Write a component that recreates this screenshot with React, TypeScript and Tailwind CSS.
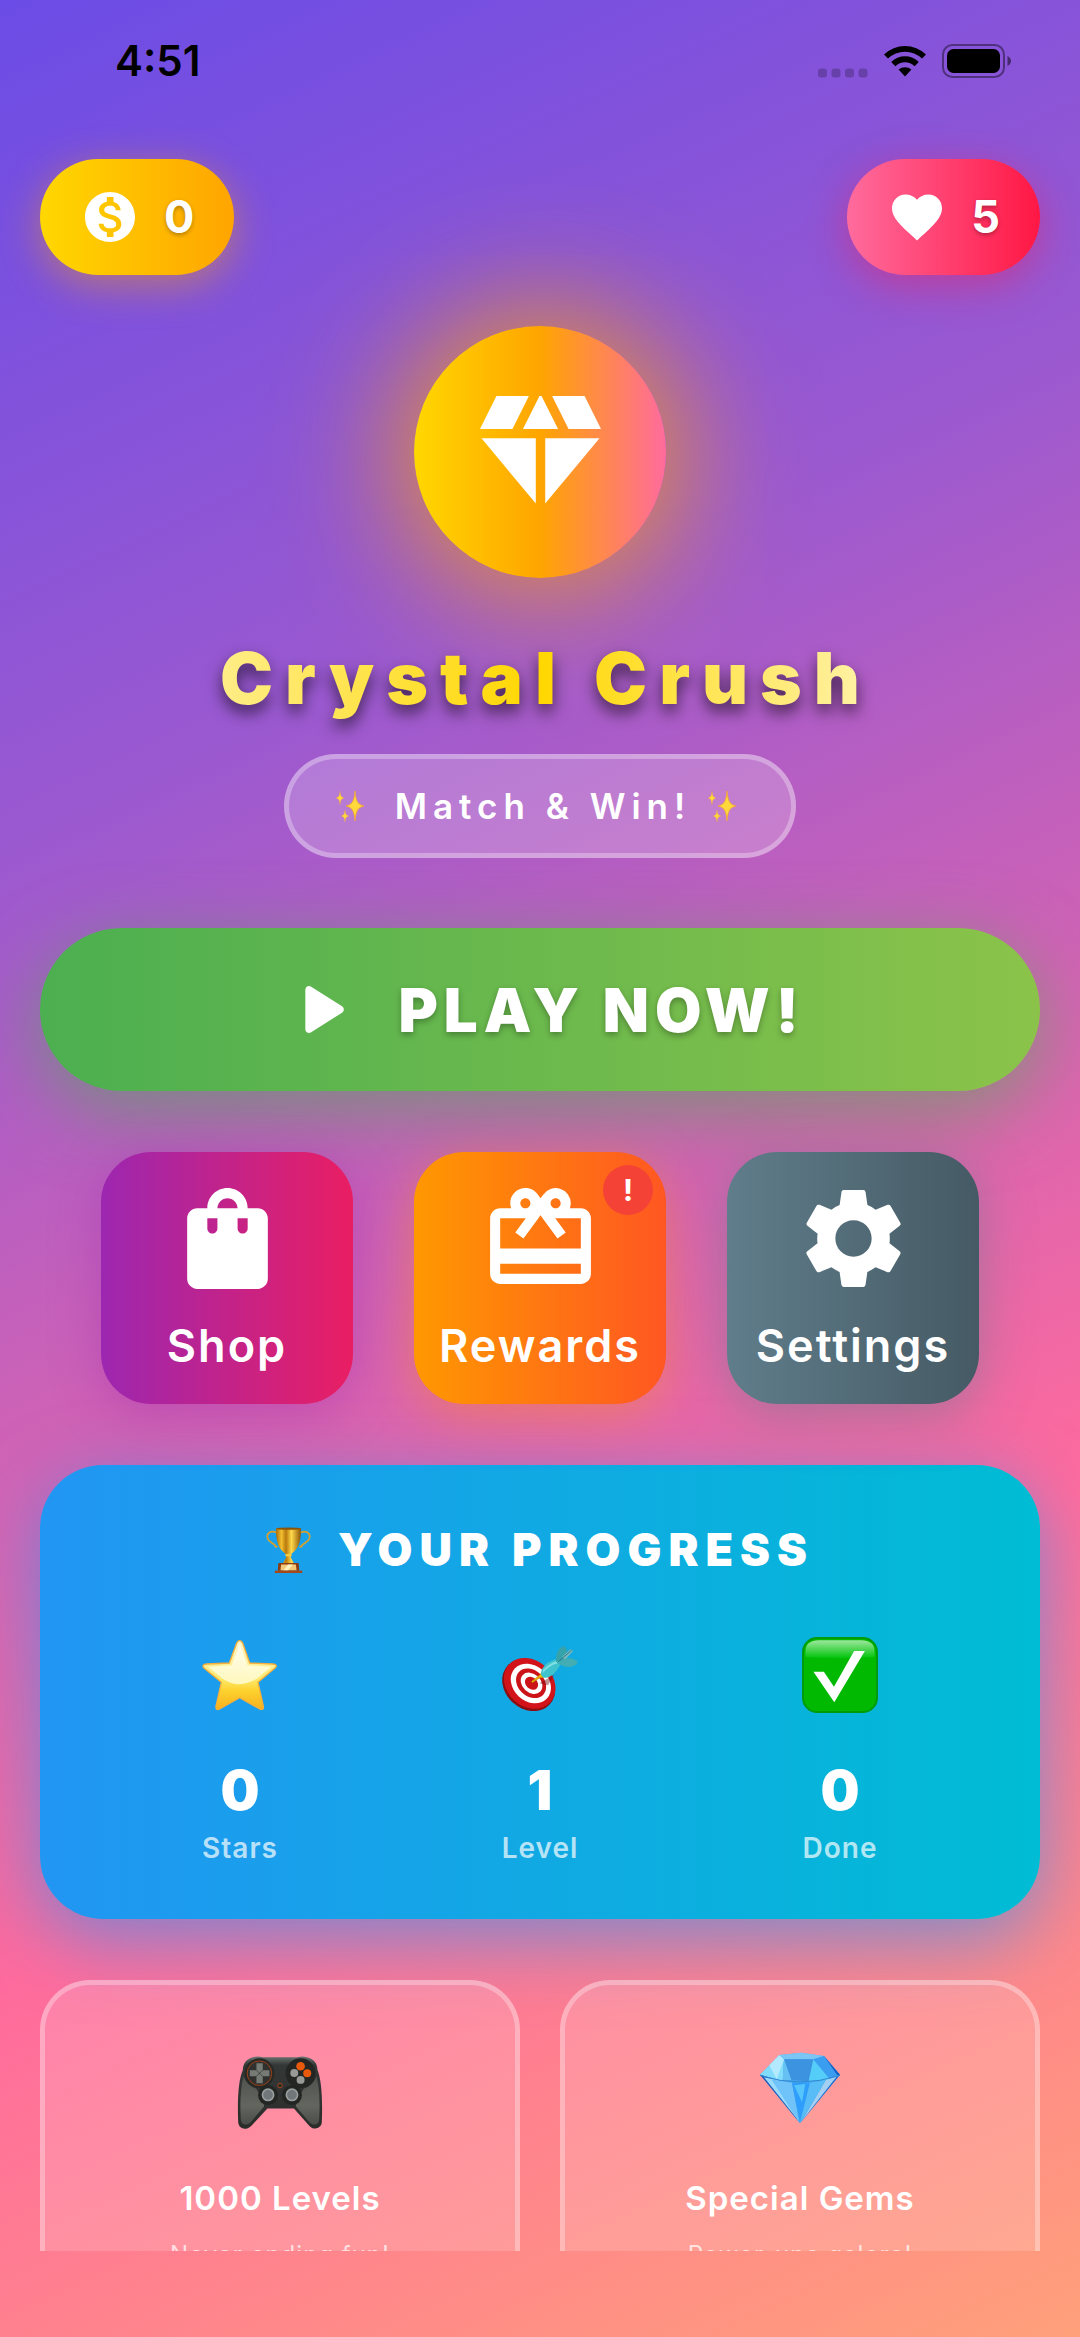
import type { ReactNode } from "react";
import {
  MdCardGiftcard,
  MdDiamond,
  MdFavorite,
  MdMonetizationOn,
  MdSettings,
  MdShoppingBag,
} from "react-icons/md";

function StatusBar() {
  return (
    <header className="flex h-[119px] shrink-0 items-start justify-between pt-9 pr-[68px] pl-[115px] text-black">
      <time className="text-[42px] leading-[50px] font-semibold">4:51</time>
      <div className="flex items-center gap-4 pt-2">
        <svg viewBox="0 0 50 33" className="h-[33px] w-[50px]" aria-label="No signal">
          <g fill="#000" fillOpacity="0.22">
            <rect x="0" y="23.500" width="9" height="9" rx="3" />
            <rect x="13.500" y="23.500" width="9" height="9" rx="3" />
            <rect x="27" y="23.500" width="9" height="9" rx="3" />
            <rect x="40.500" y="23.500" width="9" height="9" rx="3" />
          </g>
        </svg>
        <svg viewBox="0 0 42 32" className="h-[32px] w-[42px]" aria-label="Wi-Fi">
          <path d="M0 9.500A30 30 0 0 1 42 9.500L38 13.600A24.300 24.300 0 0 0 4 13.600Z" />
          <path d="M7.200 17A19.500 19.500 0 0 1 34.800 17L30.600 21.200A13.600 13.600 0 0 0 11.400 21.200Z" />
          <path d="M14.600 24.600A9.600 9.600 0 0 1 27.400 24.600L21 31.500Z" />
        </svg>
        <svg viewBox="0 0 70 34" className="h-[34px] w-[70px]" aria-label="Battery full">
          <rect x="1" y="1" width="61" height="32" rx="9.500" fill="none" stroke="#000" strokeOpacity="0.42" strokeWidth="2" />
          <rect x="5" y="5" width="53" height="24" rx="6.500" />
          <path d="M65.500 12Q69 14 69 17T65.500 22Z" fillOpacity="0.5" />
        </svg>
      </div>
    </header>
  );
}

function Sparkles() {
  const star = "M0-15C1-4 3-1.500 9 0C3 1.500 1 4 0 15C-1 4-3 1.500-9 0C-3-1.500-1-4 0-15Z";
  return (
    <svg viewBox="0 0 32 32" className="h-8 w-8" aria-hidden="true">
      <g fill="#ffd93b" stroke="#f8a52b" strokeWidth="0.700">
        <path d={star} transform="translate(20 16)" />
        <path d={star} transform="translate(5 8) scale(.45)" />
        <path d={star} transform="translate(10 26) scale(.45 .4)" />
      </g>
    </svg>
  );
}

function Trophy() {
  return (
    <svg viewBox="0 0 134 140" className="h-[47px] w-[45px]" aria-hidden="true">
      <defs>
        <linearGradient id="cup">
          <stop offset="0" stopColor="#a86a08" />
          <stop offset=".22" stopColor="#f2c02f" />
          <stop offset=".4" stopColor="#b8780c" />
          <stop offset=".62" stopColor="#ffd94a" />
          <stop offset="1" stopColor="#8c5206" />
        </linearGradient>
      </defs>
      <g fill="none" stroke="#d9a02a" strokeWidth="5">
        <path d="M34 18C14 8 0 18 5 34C9 48 24 46 32 60M26 60q4-4 8 0" />
        <path d="M100 18C120 8 134 18 129 34C125 48 110 46 102 60M108 60q-4-4-8 0" />
      </g>
      <path d="M30 4H104C105 38 98 66 78 78C72 82 72 92 82 104V108H52V104C62 92 62 82 56 78C36 66 29 38 30 4Z" fill="url(#cup)" />
      <ellipse cx="67" cy="5" rx="37" ry="3.500" fill="#8a5307" />
      <ellipse cx="67" cy="84" rx="10" ry="4" fill="#f6c945" />
      <path d="M37 107H97L99 130H35Z" fill="#8c3b12" />
      <path d="M26 130H108V137H26Z" fill="#a5481a" />
      <path d="M45 112H89L91 129H43Z" fill="#f5c877" />
      <path d="M52 129L66 112H80L66 129Z" fill="#fff0bd" />
    </svg>
  );
}

function Star() {
  return (
    <svg viewBox="0 0 228 216" className="h-[72px] w-[76px]" aria-hidden="true">
      <defs>
        <linearGradient id="starBody" x2="0" y2="1">
          <stop offset="0" stopColor="#fff6cf" />
          <stop offset=".55" stopColor="#fdea6e" />
          <stop offset=".72" stopColor="#fdd22f" />
          <stop offset="1" stopColor="#f9b01c" />
        </linearGradient>
        <linearGradient id="starShine" x2="0" y2="1">
          <stop offset="0" stopColor="#fffdf0" />
          <stop offset="1" stopColor="#fff8bd" />
        </linearGradient>
      </defs>
      <path
        d="M113 5Q119 5 123 15L143 72L212 75Q229 77 219 87L168 130L184 201Q186 216 173 210L113 176L53 210Q40 216 42 201L58 130L6 87Q-3 77 14 75L82 72L103 15Q107 5 113 5Z"
        fill="url(#starBody)"
        stroke="#f5ae3c"
        strokeWidth="4"
      />
      <path d="M113 14L137 79L208 83L164 119Q114 152 62 119L18 83L89 79Z" fill="url(#starShine)" />
    </svg>
  );
}

function Target() {
  return (
    <svg viewBox="0 0 228 216" className="h-[72px] w-[76px]" aria-hidden="true">
      <g transform="translate(0 21)">
        <ellipse cx="80" cy="117" rx="86" ry="71" transform="rotate(43 80 117)" fill="#8f0c10" />
        <g transform="rotate(43 83 112)">
          <ellipse cx="83" cy="112" rx="84" ry="69" fill="#d2141a" />
          <ellipse cx="86" cy="110" rx="66" ry="53" fill="#fff" />
          <ellipse cx="86" cy="109" rx="50" ry="39" fill="#cc1318" />
          <ellipse cx="87" cy="108" rx="36" ry="28" fill="#fff" />
          <ellipse cx="87" cy="108" rx="22" ry="17" fill="#cc1318" />
        </g>
        <path d="M112 112L157 86L138 118Z" fill="#7a1010" fillOpacity=".45" />
        <path d="M89 106L111 89L119 80L124 95L113 95L91 110Z" fill="#f3b90b" stroke="#b98308" strokeWidth="2" />
        <path d="M117 87C115 61 142 42 168 39L177 50C168 74 146 99 125 95Z" fill="#3fc3cd" />
        <path d="M123 72C136 58 150 48 168 44L167 52C148 57 134 68 123 81Z" fill="#a0eef0" fillOpacity=".65" />
        <path d="M162 48C160 24 171 2 185 1C200 8 196 28 186 42Z" fill="#36a2aa" />
        <path d="M180 33L205 10L213 15L189 41Z" fill="#7cb6bd" />
        <path d="M168 52C185 31 216 33 228 48C216 68 187 66 168 52Z" fill="#42aeb3" />
        <path d="M166 50L208 13" stroke="#287e88" strokeWidth="3" />
      </g>
    </svg>
  );
}

function CheckBadge() {
  return (
    <svg viewBox="0 0 226 226" className="h-[76px] w-[76px]" aria-hidden="true">
      <defs>
        <linearGradient id="checkGloss" x2="0" y2="1">
          <stop offset="0" stopColor="#9be79b" />
          <stop offset="1" stopColor="#00c40c" />
        </linearGradient>
      </defs>
      <rect x="3" y="3" width="220" height="220" rx="42" fill="#00b900" stroke="#009c0b" strokeWidth="6" />
      <path d="M10 60V45Q10 10 50 10H176Q216 10 216 45V60Q112 66 10 60Z" fill="url(#checkGloss)" />
      <path d="M34 103H65L95 148L155 42H187L96 194Z" fill="#fff" />
    </svg>
  );
}

function GamePad() {
  return (
    <svg viewBox="0 -12 256 232" className="h-[77px] w-[86px]" aria-hidden="true">
      <defs>
        <linearGradient id="padBody" x2="0" y2="1">
          <stop offset="0" stopColor="#6b7370" />
          <stop offset=".12" stopColor="#333735" />
          <stop offset="1" stopColor="#2b2d2b" />
        </linearGradient>
        <linearGradient id="padGrip" x2="0" y2="1">
          <stop offset="0" stopColor="#50524e" />
          <stop offset=".6" stopColor="#63655f" />
          <stop offset="1" stopColor="#4b4d49" />
        </linearGradient>
      </defs>
      <path
        d="M50 3Q62-1 76 4H180Q194-1 206 3C230 8 240 22 241 42C252 70 257 120 254 200C252 220 229 225 216 210L170 158H90L42 210C28 225 4 222 2 200C-1 120 4 70 16 42C17 22 27 8 50 3Z"
        fill="url(#padBody)"
      />
      <path d="M18 62Q30 92 56 98L78 135L80 152L40 199C27 212 12 208 10 192Q5 110 18 62Z" fill="url(#padGrip)" />
      <path d="M238 62Q226 92 200 98L178 135L176 152L216 199C229 212 244 208 246 192Q251 110 238 62Z" fill="url(#padGrip)" />
      <circle cx="66" cy="52" r="45" fill="#272927" />
      <circle cx="66" cy="52" r="37" fill="#30312f" stroke="#9a4116" strokeWidth="3" />
      <path d="M57 22H76V43H96V61H76V82H57V61H37V43H57Z" fill="#777b75" />
      <path d="M57 43L76 61M76 43L57 61" stroke="#30312f" strokeWidth="2" />
      <circle cx="190" cy="52" r="45" fill="#242624" />
      <circle cx="190" cy="31" r="13" fill="#e8590c" />
      <circle cx="210" cy="52" r="12" fill="#e8590c" />
      <circle cx="171" cy="51" r="12" fill="#989a98" />
      <circle cx="190" cy="72" r="12" fill="#989a98" />
      <circle cx="128" cy="89" r="7" fill="#272927" stroke="#a4471b" strokeWidth="3" />
      <circle cx="92" cy="118" r="30" fill="#232523" />
      <circle cx="164" cy="118" r="30" fill="#232523" />
      <circle cx="92" cy="117" r="17" fill="#70767a" stroke="#989e9e" strokeWidth="5" />
      <circle cx="164" cy="117" r="17" fill="#70767a" stroke="#989e9e" strokeWidth="5" />
    </svg>
  );
}

function Gem() {
  return (
    <svg viewBox="0 0 244 228" className="h-[76px] w-[82px]" aria-hidden="true">
      <path d="M2 68L60 9L126 2L194 12L242 68L122 214Z" fill="#47a9f3" />
      <path d="M2 68L60 9L74 22L70 87Z" fill="#82dcfb" />
      <path d="M30 40L60 9L74 22L52 82Z" fill="#b4eaff" />
      <path d="M60 9L126 2L194 12L162 22H74Z" fill="#7cc6f6" />
      <path d="M74 22H162L148 88L96 84Z" fill="#3c93df" />
      <path d="M74 22L96 84L70 87Z" fill="#67c0f2" />
      <path d="M162 22L214 84L148 88Z" fill="#54cdf9" />
      <path d="M162 22L194 12L236 66L214 84Z" fill="#3b9df0" />
      <path d="M194 12L242 68L234 70Z" fill="#1460c4" />
      <path d="M2 68L36 80L122 214Z" fill="#1d55b5" />
      <path d="M14 76L70 88L116 204Z" fill="#9adcfc" />
      <path d="M36 82L98 92L120 212Z" fill="#6fc3f8" />
      <path d="M98 92H152L122 212Z" fill="#2f9dfb" />
      <path d="M104 100L138 96L128 150Z" fill="#55c5fb" />
      <path d="M152 92L200 84L122 212Z" fill="#58bcf6" />
      <path d="M200 84L232 74L128 206Z" fill="#a3cff3" />
      <path d="M242 68L232 74L122 214Z" fill="#1f68cc" />
      <path d="M2 70Q122 110 242 70" fill="none" stroke="#3187cf" strokeWidth="3" />
    </svg>
  );
}

function Counter({ label, tone, icon, value }: { label: string; tone: string; icon: ReactNode; value: number }) {
  return (
    <button
      type="button"
      aria-label={label}
      className={`flex items-center gap-6 rounded-full bg-linear-to-r/srgb px-10 py-7 text-[45px] leading-[54px] font-bold ${tone}`}
    >
      {icon}
      <span className="text-shadow-[0_2px_4px_rgba(0,0,0,0.3)]">{value}</span>
    </button>
  );
}

function Tile({ label, tone, icon, badge }: { label: string; tone: string; icon: ReactNode; badge?: string }) {
  return (
    <button
      type="button"
      className={`relative flex size-[252px] flex-col items-center gap-5 rounded-[50px] bg-linear-to-r/srgb pt-[26px] ${tone}`}
    >
      {icon}
      <span className="text-[45px] leading-[54px] font-semibold tracking-[2px]">{label}</span>
      {badge && (
        <span className="absolute top-[13px] right-[13px] flex size-[50px] items-center justify-center rounded-full bg-[#f44336] text-[30px] font-bold">
          {badge}
        </span>
      )}
    </button>
  );
}

function Stat({ icon, value, label }: { icon: ReactNode; value: number; label: string }) {
  return (
    <div className="flex flex-col items-center">
      <div className="flex h-[76px] items-center">{icon}</div>
      <strong className="mt-11 text-[55px] leading-[66px] font-black">{value}</strong>
      <span className="mt-2 text-[28px] leading-[34px] font-semibold tracking-[1px] text-white/70">{label}</span>
    </div>
  );
}

function Feature({ icon, title, text }: { icon: ReactNode; title: string; text: string }) {
  return (
    <article className="flex h-[360px] flex-col items-center rounded-[50px] border-[5px] border-white/30 bg-white/15 pt-[65px]">
      <div className="flex h-20 items-center">{icon}</div>
      <h3 className="mt-12 text-[33px] leading-10 font-semibold tracking-[1px]">{title}</h3>
      <p className="mt-5 text-[24px] leading-[34px] tracking-[1px] text-white/70">{text}</p>
    </article>
  );
}

export default function App() {
  return (
    <div className="flex h-screen flex-col overflow-hidden bg-[linear-gradient(155deg,#6b4ce6_0%,#9b59d0_30%,#ff6b9d_70%,#ffa07a_100%)] font-['Inter',sans-serif] text-white">
      <StatusBar />
      <main className="mb-[86px] flex min-h-0 flex-1 flex-col overflow-hidden px-10 pt-10">
        <div className="flex shrink-0 justify-between">
          <Counter
            label="Coins"
            value={0}
            tone="from-[#ffd700] to-[#ffa500] shadow-[0_10px_40px_rgba(255,165,0,0.45)]"
            icon={<MdMonetizationOn className="size-[60px]" />}
          />
          <Counter
            label="Lives"
            value={5}
            tone="from-[#ff6b9d] to-[#ff1744] shadow-[0_10px_40px_rgba(255,23,68,0.4)]"
            icon={<MdFavorite className="size-[60px]" />}
          />
        </div>

        <section className="mt-[51px] flex shrink-0 flex-col items-center">
          <div className="flex size-[252px] items-center justify-center rounded-full bg-linear-to-r/srgb from-[#ffd700] via-[#ffa500] to-[#ff6b9d] shadow-[0_0_130px_15px_rgba(255,165,0,0.8)]">
            <MdDiamond className="size-[151px]" />
          </div>
          <div className="mt-[58px] drop-shadow-[0_8px_8px_rgba(0,0,0,0.6)]">
            <h1 className="bg-linear-to-r/srgb from-[#ffee8c] via-[#ffd700] to-[#fff2a8] bg-clip-text pl-3 text-[71px] leading-[84px] font-black tracking-[12px] text-transparent">
              Crystal Crush
            </h1>
          </div>
          <p className="mt-[34px] flex h-[104px] items-center rounded-full border-[5px] border-white/30 bg-white/20 pr-[52px] pl-[46px] text-[35px] font-semibold tracking-[6px]">
            <Sparkles />
            <span className="mr-4 ml-7">Match &amp; Win!</span>
            <Sparkles />
          </p>
        </section>

        <button
          type="button"
          className="mt-[70px] flex h-[163px] shrink-0 items-center justify-center gap-8 rounded-full bg-linear-to-r/srgb from-[#4caf50] to-[#8bc34a] text-[60px] font-black tracking-[6px] shadow-[0_20px_75px_rgba(76,175,80,0.6)]"
        >
          <svg viewBox="0 0 24 24" fill="currentColor" className="size-[91px]" aria-hidden="true">
            <path d="M8 6.820v10.360c0 .790.870 1.270 1.540.840l8.140-5.180c.620-.390.620-1.290 0-1.690L9.540 5.980C8.870 5.550 8 6.030 8 6.820z" />
          </svg>
          <span className="text-shadow-[0_3px_6px_rgba(0,0,0,0.3)]">PLAY NOW!</span>
        </button>

        <nav className="mt-[61px] flex shrink-0 justify-evenly">
          <Tile
            label="Shop"
            tone="from-[#9c27b0] to-[#e91e63] shadow-[0_10px_50px_rgba(156,39,176,0.4)]"
            icon={<MdShoppingBag className="size-[121px]" />}
          />
          <Tile
            label="Rewards"
            badge="!"
            tone="from-[#ff9800] to-[#ff5722] shadow-[0_10px_50px_rgba(255,152,0,0.4)]"
            icon={<MdCardGiftcard className="size-[121px]" />}
          />
          <Tile
            label="Settings"
            tone="from-[#607d8b] to-[#455a64] shadow-[0_10px_50px_rgba(96,125,139,0.5)]"
            icon={<MdSettings className="size-[121px]" />}
          />
        </nav>

        <section className="mt-[61px] shrink-0 rounded-[63px] bg-linear-to-r/srgb from-[#2196f3] to-[#00bcd4] px-[50px] pt-[50px] pb-[54px] shadow-[0_20px_75px_rgba(33,150,243,0.6)]">
          <h2 className="flex items-center justify-center gap-[27px] text-[45px] leading-[70px] font-black tracking-[7px]">
            <Trophy />
            YOUR PROGRESS
          </h2>
          <div className="mt-13 grid grid-cols-3">
            <Stat icon={<Star />} value={0} label="Stars" />
            <Stat icon={<Target />} value={1} label="Level" />
            <Stat icon={<CheckBadge />} value={0} label="Done" />
          </div>
        </section>

        <section className="mt-[61px] grid shrink-0 grid-cols-2 gap-10">
          <Feature icon={<GamePad />} title="1000 Levels" text="Never ending fun!" />
          <Feature icon={<Gem />} title="Special Gems" text="Power-ups galore!" />
        </section>
      </main>
    </div>
  );
}
